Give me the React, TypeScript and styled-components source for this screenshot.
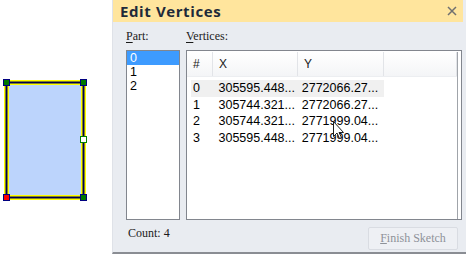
import React from 'react'
import styled, { createGlobalStyle } from 'styled-components'

const GlobalStyle = createGlobalStyle`
	html, body {
		margin: 0;
		padding: 0;
		background: #ffffff;
	}
	body {
		width: 466px;
		height: 257px;
		overflow: hidden;
	}
`

const parts = ['0', '1', '2']

const vertices = [
	{ id: '0', x: '305595.448...', y: '2772066.27...' },
	{ id: '1', x: '305744.321...', y: '2772066.27...' },
	{ id: '2', x: '305744.321...', y: '2771999.04...' },
	{ id: '3', x: '305595.448...', y: '2771999.04...' },
]

const Sketch = () => (
	<Canvas>
		<svg width='112' height='257' viewBox='0 0 112 257'>
			<rect x='6.5' y='82.5' width='77' height='115' fill='#bcd4fc' />
			<rect x='6.5' y='82.5' width='77' height='115' fill='none' stroke='#ffff00' strokeWidth='5' />
			<rect x='6.5' y='82.5' width='77' height='115' fill='none' stroke='#000050' strokeWidth='2' />
			<rect x='3.5' y='79.5' width='6' height='6' fill='#007800' stroke='#000080' />
			<rect x='80.5' y='79.5' width='6' height='6' fill='#007800' stroke='#000080' />
			<rect x='80.5' y='194.5' width='6' height='6' fill='#007800' stroke='#000080' />
			<rect x='3.5' y='194.5' width='6' height='6' fill='#ff0000' stroke='#000080' />
			<rect x='80.5' y='136.5' width='6' height='6' fill='#ffffff' stroke='#008000' />
		</svg>
	</Canvas>
)

const Cursor = () => (
	<CursorMark width='12' height='19' viewBox='0 0 12 19'>
		<path d='M0.5 0.5 L0.5 15.5 L4 12 L6.5 17.5 L8.5 16.5 L6 11.5 L10.5 11.5 Z' fill='#ffffff' stroke='#202020' strokeWidth='1' />
	</CursorMark>
)

export default function App() {
	return (
		<>
			<GlobalStyle />
			<Page>
				<Sketch />
				<Dialog>
					<TitleBar>
						<Title>Edit Vertices</Title>
						<CloseButton>
							<svg width='10' height='10' viewBox='0 0 10 10'>
								<path d='M1 1 L9 9 M9 1 L1 9' stroke='#707070' strokeWidth='1.5' />
							</svg>
						</CloseButton>
					</TitleBar>
					<Body>
						<Column width={54}>
							<Label><u>P</u>art:</Label>
							<ListBox>
								{parts.map((p, i) => (
									<PartItem key={p} selected={i === 0}>{p}</PartItem>
								))}
							</ListBox>
						</Column>
						<Column width={276}>
							<Label><u>V</u>ertices:</Label>
							<ListBox>
								<Table>
									<Header>
										<HeadCell width={26}>#</HeadCell>
										<HeadCell width={85}>X</HeadCell>
										<HeadCell width={86}>Y</HeadCell>
										<HeadCell width={73} />
									</Header>
									{vertices.map((v, i) => (
										<Row key={v.id} highlight={i === 0}>
											<Cell width={26}>{v.id}</Cell>
											<Cell width={85}>{v.x}</Cell>
											<Cell width={86}>{v.y}</Cell>
										</Row>
									))}
									<Cursor />
								</Table>
							</ListBox>
						</Column>
					</Body>
					<Footer>
						<Count>Count: 4</Count>
						<FinishButton disabled><u>F</u>inish Sketch</FinishButton>
					</Footer>
				</Dialog>
			</Page>
		</>
	)
}

const Page = styled.div`
	display: flex;
	flex-direction: row;
	width: 466px;
	height: 257px;
`

const Canvas = styled.div`
	width: 112px;
	height: 257px;
	flex-shrink: 0;
	svg {
		display: block;
	}
`

const Dialog = styled.div`
	width: 354px;
	height: 254px;
	box-sizing: border-box;
	background: #e9ecf1;
	border-left: 1px solid #dfe2e8;
	border-bottom: 2px solid #8a8d93;
	padding-right: 3px;
	display: flex;
	flex-direction: column;
`

const TitleBar = styled.div`
	height: 22px;
	background: #ffe59d;
	display: flex;
	align-items: center;
	justify-content: space-between;
	padding: 0 6px 0 7px;
`

const Title = styled.div`
	font-family: "Open Sans", "DejaVu Sans", sans-serif;
	font-weight: 700;
	font-size: 15px;
	color: #1e2a3a;
	letter-spacing: 0.6px;
`

const CloseButton = styled.div`
	display: flex;
	align-items: center;
	svg {
		display: block;
	}
`

const Body = styled.div`
	display: flex;
	flex-direction: row;
	gap: 6px;
	padding: 7px 0 0 13px;
`

const Column = styled.div<{ width: number }>`
	width: ${p => p.width}px;
	display: flex;
	flex-direction: column;
`

const Label = styled.div`
	font-family: "Liberation Serif", serif;
	font-size: 12px;
	color: #1a1a1a;
	height: 21px;
	line-height: 14px;
	u {
		text-decoration-thickness: 1px;
		text-underline-offset: 2px;
	}
`

const ListBox = styled.div`
	height: 170px;
	box-sizing: border-box;
	background: #ffffff;
	border: 1px solid #82868e;
	overflow: hidden;
	position: relative;
`

const PartItem = styled.div<{ selected?: boolean }>`
	height: 14px;
	line-height: 14px;
	padding-left: 3px;
	font-family: "Liberation Sans", sans-serif;
	font-size: 12.5px;
	color: ${p => (p.selected ? '#ffffff' : '#000000')};
	background: ${p => (p.selected ? '#3d9bff' : 'transparent')};
`

const Table = styled.div`
	position: relative;
	height: 100%;
	border-right: 1px solid #a0a4aa;
	box-sizing: border-box;
	margin-right: 3px;
`

const Header = styled.div`
	display: flex;
	height: 24px;
	margin: 1px 0 3px 0;
	background: linear-gradient(#ffffff, #f4f5f7);
	border-bottom: 1px solid #eceef1;
`

const HeadCell = styled.div<{ width: number }>`
	width: ${p => p.width}px;
	box-sizing: border-box;
	border-right: 1px solid #e2e4e8;
	padding-left: 6px;
	display: flex;
	align-items: center;
	font-family: "Liberation Sans", sans-serif;
	font-size: 12px;
	color: #1a1a1a;
`

const Row = styled.div<{ highlight?: boolean }>`
	display: flex;
	height: 16.5px;
	align-items: center;
	margin-left: 4px;
	width: 193px;
	background: ${p => (p.highlight ? '#f0f0f0' : 'transparent')};
`

const Cell = styled.div<{ width: number }>`
	width: ${p => p.width}px;
	padding-left: 2px;
	box-sizing: border-box;
	font-family: "Liberation Sans", sans-serif;
	font-size: 12.5px;
	color: #000000;
	white-space: nowrap;
`

const CursorMark = styled.svg`
	position: absolute;
	left: 146px;
	top: 69px;
`

const Footer = styled.div`
	display: flex;
	flex-direction: row;
	justify-content: space-between;
	align-items: flex-start;
	padding: 6px 5px 0 15px;
`

const Count = styled.div`
	font-family: "Liberation Serif", serif;
	font-size: 12px;
	line-height: 14px;
	margin-top: 0;
	color: #1a1a1a;
`

const FinishButton = styled.button`
	width: 90px;
	height: 23px;
	margin-top: 1px;
	background: #eef0f4;
	border: 1px solid #d9dce2;
	border-radius: 2px;
	font-family: "Liberation Serif", serif;
	font-size: 12px;
	color: #8e9299;
	padding: 0;
`
